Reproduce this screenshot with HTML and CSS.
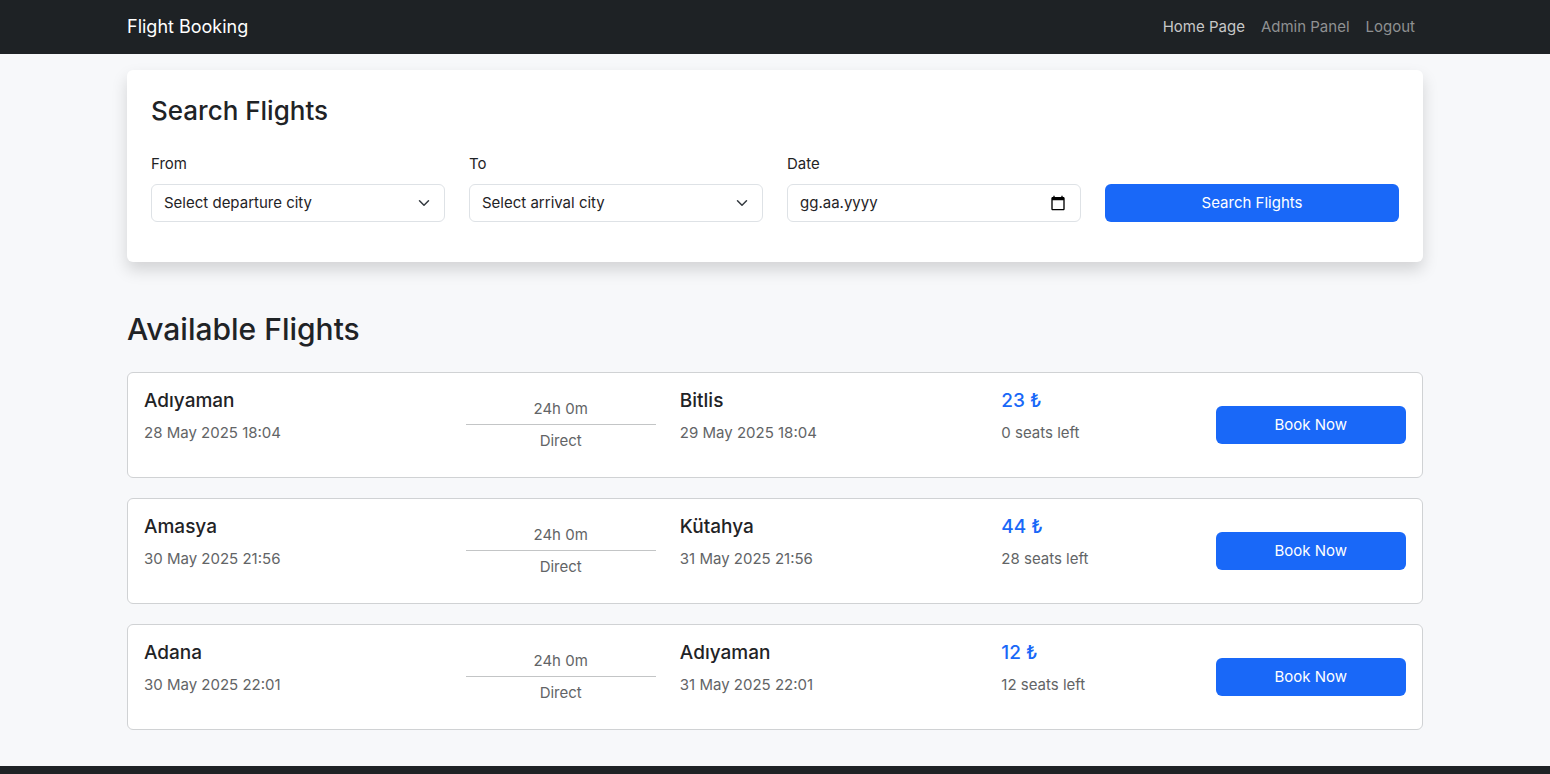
FILE: index.html
```
<!DOCTYPE html>
<html lang="en">
<head>
<meta charset="utf-8">
<meta name="viewport" content="width=device-width, initial-scale=1">
<title>Flight Booking</title>
<link rel="stylesheet" href="styles.css">
</head>
<body>
<header class="navbar">
  <div class="container navbar-inner">
    <a class="brand" href="#">Flight Booking</a>
    <nav class="nav-links">
      <a class="nav-link nav-link-active" href="#">Home Page</a>
      <a class="nav-link" href="#">Admin Panel</a>
      <a class="nav-link" href="#">Logout</a>
    </nav>
  </div>
</header>

<main class="container main">
  <section class="search-card">
    <h3 class="search-title">Search Flights</h3>
    <form class="search-form">
      <div class="field">
        <label class="label" for="from">From</label>
        <div class="select-box">
          <select class="control" id="from"><option>Select departure city</option></select>
          <svg class="chevron" viewBox="0 0 16 16" aria-hidden="true"><path d="m2 5 6 6 6-6"/></svg>
        </div>
      </div>
      <div class="field">
        <label class="label" for="to">To</label>
        <div class="select-box">
          <select class="control" id="to"><option>Select arrival city</option></select>
          <svg class="chevron" viewBox="0 0 16 16" aria-hidden="true"><path d="m2 5 6 6 6-6"/></svg>
        </div>
      </div>
      <div class="field">
        <label class="label" for="date">Date</label>
        <div class="date-box">
          <input class="date-input" id="date" type="text" placeholder="gg.aa.yyyy">
          <button class="date-button" type="button" aria-label="Open calendar">
            <svg class="calendar" viewBox="0 0 24 24" aria-hidden="true"><path d="M20 3h-1V1h-2v2H7V1H5v2H4c-1.1 0-2 .9-2 2v16c0 1.1.9 2 2 2h16c1.1 0 2-.9 2-2V5c0-1.1-.9-2-2-2zm0 18H4V8h16v13z"/></svg>
          </button>
        </div>
      </div>
      <button class="btn" type="submit">Search Flights</button>
    </form>
  </section>

  <h2 class="list-title">Available Flights</h2>
  <div class="flights">
    <article class="flight">
      <div class="stop"><h5 class="city">Adıyaman</h5><p class="muted">28 May 2025 18:04</p></div>
      <div class="leg"><span>24h 0m</span><hr class="leg-line"><span>Direct</span></div>
      <div class="stop"><h5 class="city">Bitlis</h5><p class="muted">29 May 2025 18:04</p></div>
      <div class="fare"><h5 class="city price">23 ₺</h5><p class="muted">0 seats left</p></div>
      <button class="btn book" type="button">Book Now</button>
    </article>
    <article class="flight">
      <div class="stop"><h5 class="city">Amasya</h5><p class="muted">30 May 2025 21:56</p></div>
      <div class="leg"><span>24h 0m</span><hr class="leg-line"><span>Direct</span></div>
      <div class="stop"><h5 class="city">Kütahya</h5><p class="muted">31 May 2025 21:56</p></div>
      <div class="fare"><h5 class="city price">44 ₺</h5><p class="muted">28 seats left</p></div>
      <button class="btn book" type="button">Book Now</button>
    </article>
    <article class="flight">
      <div class="stop"><h5 class="city">Adana</h5><p class="muted">30 May 2025 22:01</p></div>
      <div class="leg"><span>24h 0m</span><hr class="leg-line"><span>Direct</span></div>
      <div class="stop"><h5 class="city">Adıyaman</h5><p class="muted">31 May 2025 22:01</p></div>
      <div class="fare"><h5 class="city price">12 ₺</h5><p class="muted">12 seats left</p></div>
      <button class="btn book" type="button">Book Now</button>
    </article>
  </div>
</main>
<footer class="footer"></footer>
</body>
</html>
```

FILE: styles.css
```
* { box-sizing: border-box; }

body {
  margin: 0;
  background: #f7f8fa;
  color: #1f2326;
  font-family: Inter, "Liberation Sans", sans-serif;
  font-size: 15px;
  line-height: 24px;
}

h2, h3, h5, p { margin: 0; font-weight: 500; }

.container {
  width: 100%;
  max-width: 1320px;
  margin: 0 auto;
  padding: 0 12px;
}

.navbar { background: #1e2225; }

.navbar-inner {
  display: flex;
  align-items: center;
  justify-content: space-between;
  min-height: 54px;
}

.brand {
  color: #fff;
  font-size: 18px;
  line-height: 30px;
  text-decoration: none;
}

.nav-links { display: flex; }

.nav-link {
  padding: 8px;
  color: #8f9192;
  text-decoration: none;
}

.nav-link-active { color: #c7c8c8; }

.main { padding-top: 16px; padding-bottom: 36px; }

.search-card {
  padding: 24px;
  border-radius: 6px;
  background: #fff;
  box-shadow: 0 8px 16px rgba(0, 0, 0, 0.15);
}

.search-title { font-size: 26px; line-height: 34px; }

.search-form {
  display: grid;
  grid-template-columns: repeat(4, minmax(0, 1fr));
  align-items: end;
  gap: 24px;
  margin: 24px 0 16px;
}

.label { display: block; margin-bottom: 8px; }

.select-box, .date-box {
  height: 38px;
  border: 1px solid #dee2e6;
  border-radius: 6px;
  background: #fff;
}

.select-box { display: grid; align-items: center; }

.control {
  grid-area: 1 / 1;
  width: 100%;
  height: 36px;
  padding: 0 36px 0 12px;
  border: 0;
  border-radius: 6px;
  background: transparent;
  color: inherit;
  font: inherit;
  appearance: none;
}

.chevron {
  grid-area: 1 / 1;
  justify-self: end;
  width: 16px;
  height: 12px;
  margin-right: 12px;
  fill: none;
  stroke: #343a40;
  stroke-width: 2;
  stroke-linecap: round;
  stroke-linejoin: round;
  pointer-events: none;
}

.date-box { display: flex; align-items: center; padding: 0 14px 0 12px; }

.date-input {
  flex: 1;
  min-width: 0;
  padding: 0;
  border: 0;
  background: transparent;
  color: inherit;
  font: inherit;
}

.date-input::placeholder { color: inherit; opacity: 1; }

.date-button { display: flex; padding: 0; border: 0; background: none; }

.calendar { width: 16px; height: 16px; fill: #000; }

.btn {
  height: 38px;
  padding: 0 12px;
  border: 0;
  border-radius: 6px;
  background: #1968f8;
  color: #fff;
  font: inherit;
}

.list-title { margin: 48px 0 24px; font-size: 30px; line-height: 38px; }

.flights { display: grid; gap: 20px; }

.flight {
  display: grid;
  grid-template-columns: repeat(12, minmax(0, 1fr));
  align-items: center;
  column-gap: 24px;
  padding: 16px;
  border: 1px solid #d0d2d4;
  border-radius: 6px;
  background: #fff;
}

.stop { grid-column: span 3; padding-bottom: 16px; }

.leg, .fare, .book { grid-column: span 2; }

.fare { padding-bottom: 16px; }

.city { margin-bottom: 8px; font-size: 19px; line-height: 24px; }

.price { color: #1968f8; }

.muted, .leg { color: #626466; font-weight: 400; }

.leg { display: flex; flex-direction: column; text-align: center; }

.leg-line {
  width: 100%;
  margin: 3px 0 4px;
  border: 0;
  border-top: 1px solid #c3c5c6;
}

.footer { height: 8px; background: #1e2225; }
```
